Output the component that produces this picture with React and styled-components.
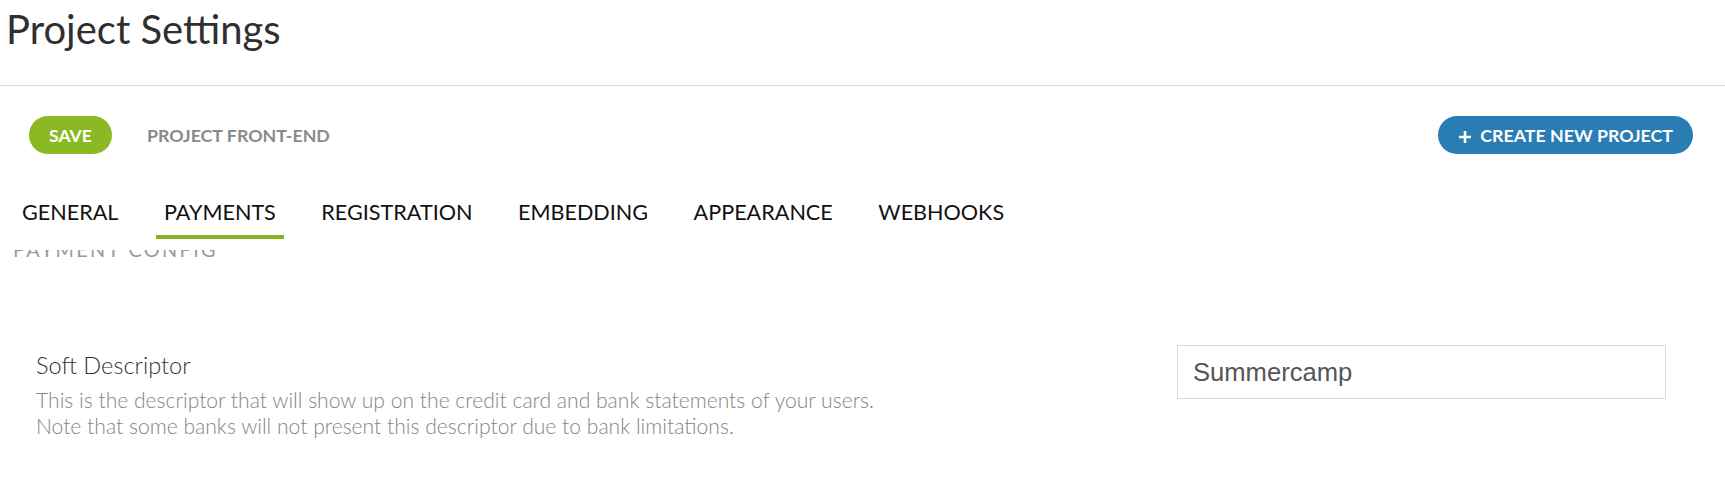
import React from "react";
import styled, { createGlobalStyle } from "styled-components";

const Global = createGlobalStyle`
  html, body { margin: 0; padding: 0; background: #fff; }
  body { font-family: Lato, "Open Sans", sans-serif; color: #333; }
  * { box-sizing: border-box; }
`;

const Page = styled.div`
  width: 1725px;
  display: flex;
  flex-direction: column;
`;

const Header = styled.header`
  padding: 5px 6px 32px;
  border-bottom: 1px solid #dcdcdc;
`;

const Title = styled.h1`
  margin: 0;
  font-size: 40px;
  line-height: 48px;
  font-weight: 400;
  color: #2f2f2f;
`;

const Toolbar = styled.div`
  display: flex;
  align-items: center;
  padding: 30px 32px 0 29px;
`;

const Pill = styled.button`
  height: 38px;
  border: none;
  border-radius: 19px;
  padding: 0 20px;
  display: inline-flex;
  align-items: center;
  gap: 8px;
  font-family: Lato, sans-serif;
  font-weight: 700;
  font-size: ${(p) => (p.$tone === "blue" ? "17.8px" : "17.6px")};
  color: #fff;
  background: ${(p) => (p.$tone === "blue" ? "#2a7db3" : "#8ab923")};
  cursor: pointer;
`;

const LinkButton = styled.button`
  border: none;
  background: none;
  padding: 0;
  margin-left: 35px;
  font-family: Lato, sans-serif;
  font-weight: 700;
  font-size: 17.8px;
  color: #8a8a8a;
`;

const Spacer = styled.div`
  flex: 1;
`;

const Tabs = styled.nav`
  display: flex;
  gap: 29.5px;
  padding: 46px 0 11px 14px;
  background: #fff;
`;

const Tab = styled.div`
  padding: 0 8px 10px;
  font-size: 21.6px;
  line-height: 25px;
  color: #111;
  border-bottom: 4px solid ${(p) => (p.$active ? "#86b521" : "transparent")};
`;

const Content = styled.section`
  overflow: hidden;
  padding: 0 59px 40px 0;
`;

const SectionTitle = styled.h2`
  margin: -13px 0 0 13px;
  font-size: 19.8px;
  line-height: 24px;
  font-weight: 400;
  letter-spacing: 2.4px;
  color: #9a9a9a;
`;

const Row = styled.div`
  display: grid;
  grid-template-columns: 1fr 489px;
  margin-top: 84px;
  padding-left: 36px;
`;

const Label = styled.div`
  padding-top: 6px;
  font-size: 23.6px;
  line-height: 28px;
  font-weight: 300;
  color: #333;
`;

const Help = styled.p`
  margin: 8px 0 0;
  font-size: 21.1px;
  line-height: 26.4px;
  font-weight: 300;
  color: #858585;
`;

const Input = styled.input`
  width: 489px;
  height: 54px;
  border: 1px solid #d9d9d9;
  padding: 0 15px;
  font-family: "Liberation Sans", Arial, sans-serif;
  font-size: 25.6px;
  color: #555;
  outline: none;
`;

const PlusIcon = () => (
  <svg width="14" height="14" viewBox="0 0 14 14" style={{ marginTop: 4 }}>
    <path d="M7 1v12M1 7h12" stroke="#fff" strokeWidth="2.6" />
  </svg>
);

const tabs = ["GENERAL", "PAYMENTS", "REGISTRATION", "EMBEDDING", "APPEARANCE", "WEBHOOKS"];

export default function App() {
  return (
    <Page>
      <Global />
      <Header>
        <Title>Project Settings</Title>
      </Header>
      <Toolbar>
        <Pill>SAVE</Pill>
        <LinkButton>PROJECT FRONT-END</LinkButton>
        <Spacer />
        <Pill $tone="blue">
          <PlusIcon />
          CREATE NEW PROJECT
        </Pill>
      </Toolbar>
      <Tabs>
        {tabs.map((t) => (
          <Tab key={t} $active={t === "PAYMENTS"}>
            {t}
          </Tab>
        ))}
      </Tabs>
      <Content>
        <SectionTitle>PAYMENT CONFIG</SectionTitle>
        <Row>
          <div>
            <Label>Soft Descriptor</Label>
            <Help>
              This is the descriptor that will show up on the credit card and bank statements of your users.
              <br />
              Note that some banks will not present this descriptor due to bank limitations.
            </Help>
          </div>
          <Input defaultValue="Summercamp" />
        </Row>
      </Content>
    </Page>
  );
}
